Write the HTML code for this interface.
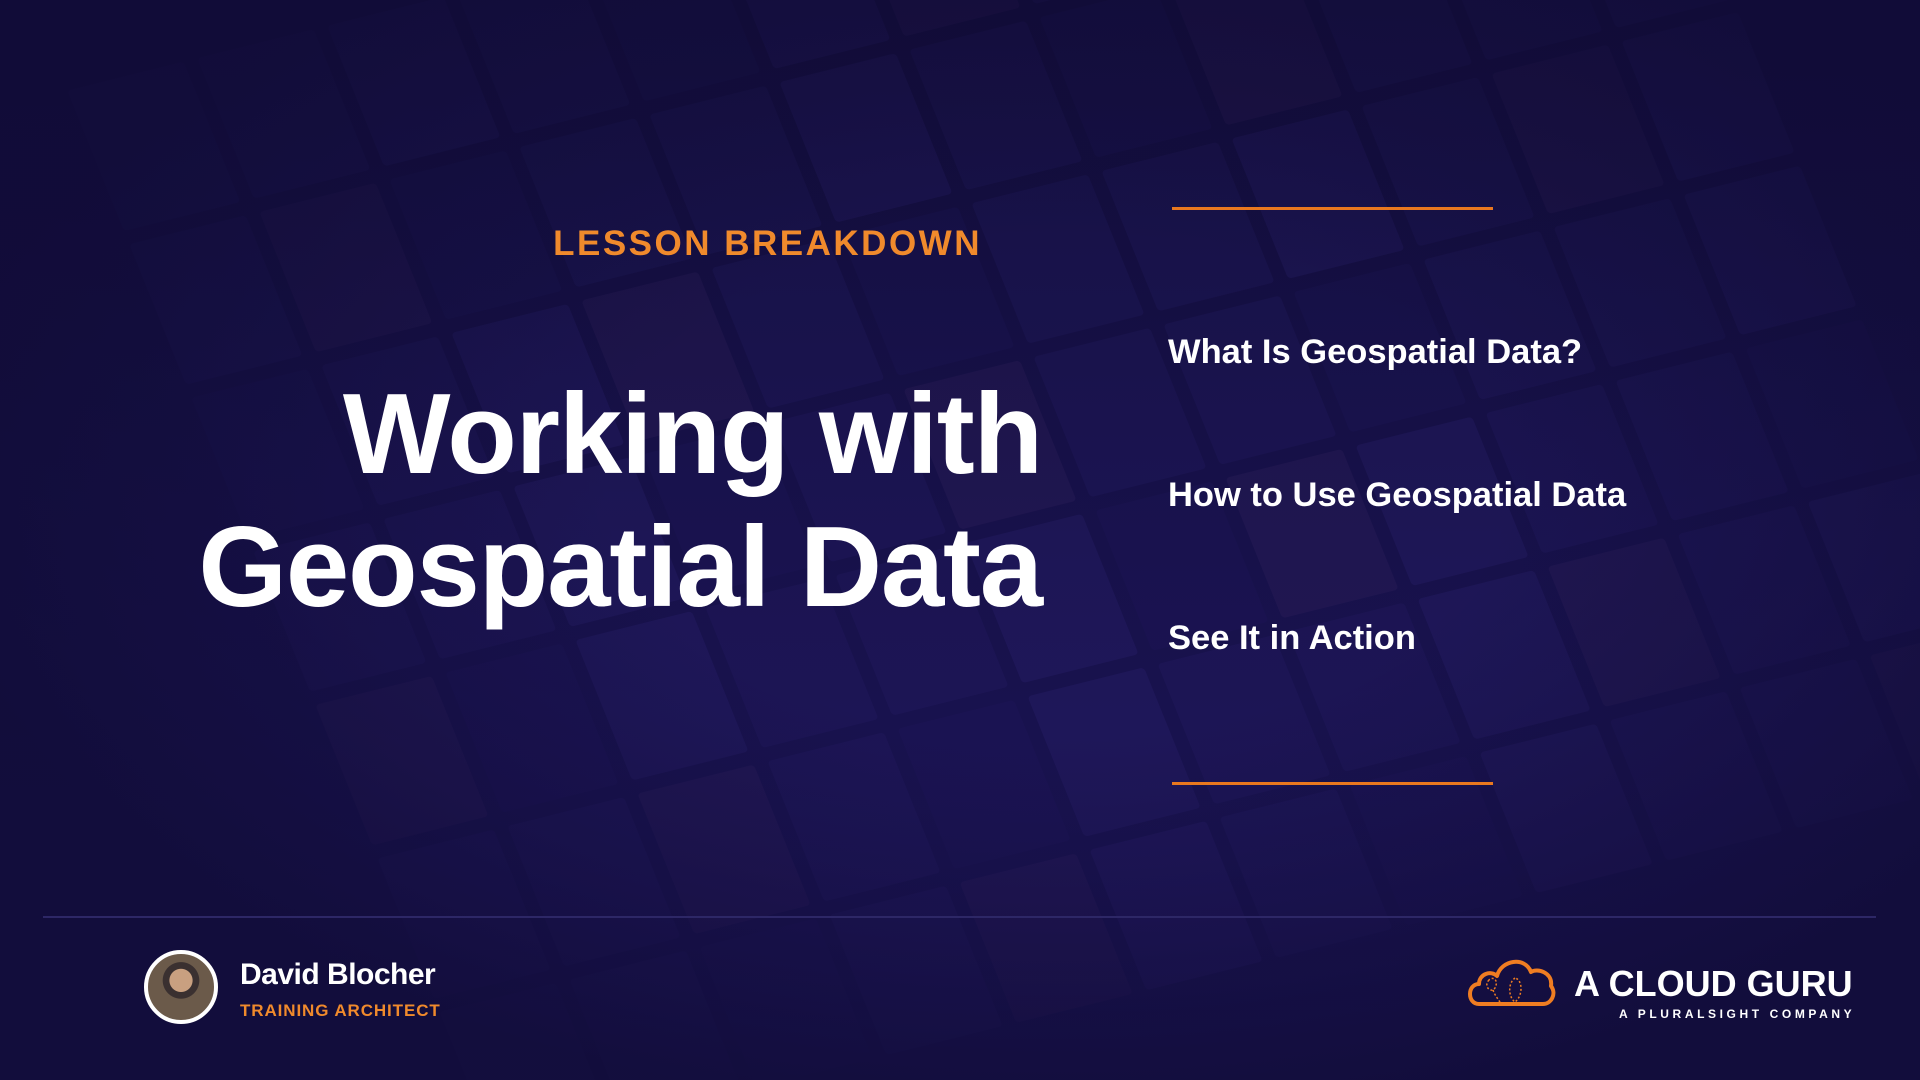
<!DOCTYPE html>
<html><head><meta charset="utf-8"><style>
*{margin:0;padding:0;box-sizing:border-box}
html,body{width:1920px;height:1080px;overflow:hidden}
body{position:relative;font-family:"Liberation Sans",sans-serif;background:linear-gradient(180deg,#110c38 0%,#17114a 50%,#1b1456 100%);color:#fff}
.tiles{position:absolute;left:0;top:0;width:1920px;height:1080px;overflow:hidden}
.grid{position:absolute;left:250px;top:-150px;width:1700px;height:1100px;transform:rotate(-14deg) skewX(8deg);display:grid;grid-template-columns:repeat(12,120px);gap:14px;opacity:.12}
.grid div{height:150px;background:#3a2f8a;border-radius:4px}
.grid div:nth-child(3n){background:#4a3aa6}
.grid div:nth-child(5n){background:#2a2070}
.grid div:nth-child(7n){background:#5a3a7a}
.vig{position:absolute;inset:0;background:radial-gradient(ellipse at 55% 45%,rgba(20,14,60,0) 30%,rgba(17,12,56,.85) 75%)}
.abs{position:absolute;white-space:nowrap}
.or{color:#f08a2c}
</style></head><body>
<div class="tiles"><div class="grid">
<div></div><div></div><div></div><div></div><div></div><div></div><div></div><div></div><div></div><div></div><div></div><div></div>
<div></div><div></div><div></div><div></div><div></div><div></div><div></div><div></div><div></div><div></div><div></div><div></div>
<div></div><div></div><div></div><div></div><div></div><div></div><div></div><div></div><div></div><div></div><div></div><div></div>
<div></div><div></div><div></div><div></div><div></div><div></div><div></div><div></div><div></div><div></div><div></div><div></div>
<div></div><div></div><div></div><div></div><div></div><div></div><div></div><div></div><div></div><div></div><div></div><div></div>
<div></div><div></div><div></div><div></div><div></div><div></div><div></div><div></div><div></div><div></div><div></div><div></div>
<div></div><div></div><div></div><div></div><div></div><div></div><div></div><div></div><div></div><div></div><div></div><div></div>
</div><div class="vig"></div></div>

<div class="abs or" style="right:938px;top:224px;text-align:right;font-weight:bold;font-size:35px;letter-spacing:2.5px">LESSON BREAKDOWN</div>
<div class="abs" style="right:878px;top:368px;text-align:right;font-weight:bold;font-size:114px;line-height:133px;letter-spacing:-1.2px">Working with<br>Geospatial Data</div>

<div class="abs" style="left:1172px;top:207px;width:321px;height:3px;background:#e9781f"></div>
<div class="abs" style="left:1172px;top:782px;width:321px;height:3px;background:#e9781f"></div>
<div class="abs" style="left:1168px;top:333px;font-weight:bold;font-size:34.5px">What Is Geospatial Data?</div>
<div class="abs" style="left:1168px;top:476px;font-weight:bold;font-size:34.5px">How to Use Geospatial Data</div>
<div class="abs" style="left:1168px;top:619px;font-weight:bold;font-size:34.5px">See It in Action</div>

<div class="abs" style="left:43px;top:916px;width:1833px;height:2px;background:#2d2766"></div>

<div class="abs" style="left:144px;top:950px;width:74px;height:74px;border-radius:50%;border:4px solid #fff;background:radial-gradient(circle at 50% 40%,#c9a080 0 22%,#3a3030 23% 35%,#6b5a4a 36%)"></div>
<div class="abs" style="left:240px;top:958px;font-weight:bold;font-size:30px;letter-spacing:-.5px">David Blocher</div>
<div class="abs or" style="left:240px;top:1001px;font-weight:bold;font-size:17px;letter-spacing:.9px">TRAINING ARCHITECT</div>

<svg class="abs" style="left:1465px;top:950px" width="94" height="60" viewBox="0 0 94 60">
<path d="M14 54 C2 54 2 34 14 34 C14 24 26 20 32 26 C36 10 60 6 66 22 C72 18 88 22 86 36 C92 44 86 54 78 54 Z" fill="none" stroke="#ef7d22" stroke-width="4" stroke-linejoin="round"/>
<path d="M24 30 C18 36 26 44 30 38 C34 30 28 26 24 30 M28 40 C30 46 34 50 36 54 M50 28 C42 34 44 48 50 52 C58 46 58 30 50 28" fill="none" stroke="#ef7d22" stroke-width="1.5" stroke-dasharray="2 2"/>
</svg>
<div class="abs" style="left:1574px;top:963px;font-weight:bold;font-size:36px;letter-spacing:0px">A CLOUD GURU</div>
<div class="abs" style="left:1619px;top:1007px;font-weight:bold;font-size:12px;letter-spacing:3.6px">A PLURALSIGHT COMPANY</div>
</body></html>
